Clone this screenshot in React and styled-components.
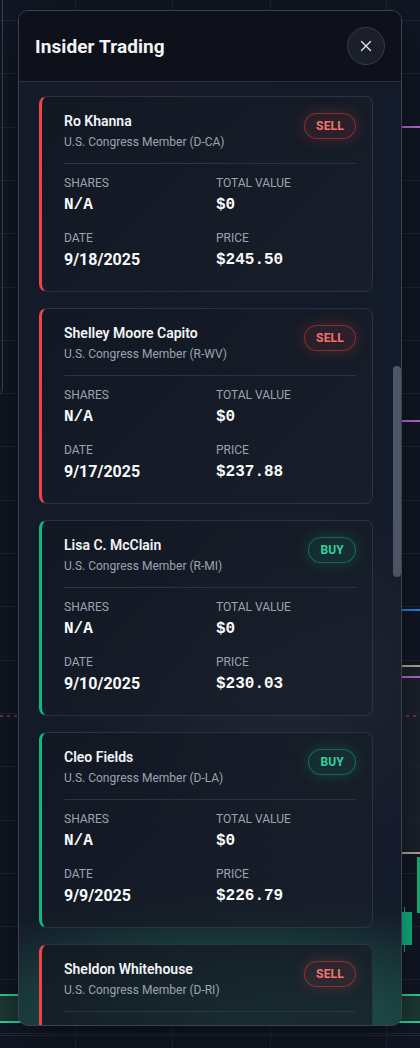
import React from 'react';
import styled, { createGlobalStyle } from 'styled-components';
import { X } from 'lucide-react';

const GlobalStyle = createGlobalStyle`
	* { box-sizing: border-box; }
	body {
		margin: 0;
		background: #111725;
		font-family: Roboto, "Noto Sans", sans-serif;
		color: #f3f4f6;
	}
`;

const StyledPage = styled.div`
	position: relative;
	width: 420px;
	height: 1048px;
	overflow: hidden;
	background: #111725;
`;

const StyledChart = styled.svg`
	position: absolute;
	inset: 0;
	z-index: 0;
`;

const StyledModal = styled.div`
	position: absolute;
	top: 10px;
	left: 18px;
	width: 384px;
	height: 1016px;
	z-index: 1;
	display: flex;
	flex-direction: column;
	border: 1px solid #3a4150;
	border-radius: 10px;
	overflow: hidden;
	background:
		radial-gradient(ellipse 90% 13% at 55% 100%, rgba(45, 160, 115, 0.6), transparent 100%),
		radial-gradient(ellipse 60% 20% at 70% 66%, rgba(60, 55, 70, 0.35), transparent 100%),
		radial-gradient(ellipse 60% 10% at 30% 0%, rgba(60, 30, 45, 0.45), transparent 100%),
		#131a29;
	box-shadow: 0 10px 40px rgba(0, 0, 0, 0.5);
`;

const StyledHeader = styled.div`
	height: 71px;
	flex-shrink: 0;
	display: flex;
	align-items: center;
	justify-content: space-between;
	padding: 0 16px 0 16px;
	background: #0e111a;
	border-bottom: 1px solid #2a3040;
`;

const StyledTitle = styled.h2`
	margin: 0;
	font-size: 19px;
	font-weight: 700;
	color: #f3f4f6;
	letter-spacing: 0.1px;
`;

const StyledClose = styled.button`
	width: 38px;
	height: 38px;
	border-radius: 50%;
	border: 1px solid #343b4a;
	background: #1a1f2b;
	color: #e5e7eb;
	display: flex;
	align-items: center;
	justify-content: center;
	padding: 0;
`;

const StyledBody = styled.div`
	position: relative;
	flex: 1;
	overflow: hidden;
	padding: 14px 28px 14px 20px;
	display: flex;
	flex-direction: column;
	gap: 16px;
`;

// scroll thumb drawn over the list's right edge
const StyledThumb = styled.div`
	position: absolute;
	right: 0;
	width: 8px;
	border-radius: 4px;
	background: #4b5563;
`;

const StyledCard = styled.div`
	flex-shrink: 0;
	border: 1px solid #2b333f;
	border-left: 3px solid ${props => (props.type === 'BUY' ? '#10b981' : '#ef4444')};
	border-radius: 8px;
	background: linear-gradient(135deg, rgba(18, 24, 34, 0.86), rgba(24, 32, 42, 0.74));
	padding: 14px 16px 20px 22px;
`;

const StyledCardTop = styled.div`
	display: flex;
	justify-content: space-between;
	align-items: flex-start;
	padding-bottom: 12px;
	border-bottom: 1px solid #2c3440;
`;

const StyledName = styled.div`
	font-size: 14px;
	line-height: 20px;
	font-weight: 600;
	color: #f3f4f6;
`;

const StyledRole = styled.div`
	margin-top: 2px;
	font-size: 12px;
	line-height: 18px;
	color: #9ca3af;
`;

const StyledBadge = styled.span`
	margin-top: 2px;
	height: 26px;
	padding: 0 11px;
	display: flex;
	align-items: center;
	border-radius: 13px;
	font-size: 12px;
	font-weight: 700;
	letter-spacing: 0.2px;
	color: ${props => (props.type === 'BUY' ? '#34d399' : '#f87171')};
	border: 1px solid ${props => (props.type === 'BUY' ? 'rgba(16, 185, 129, 0.45)' : 'rgba(239, 68, 68, 0.45)')};
	background: ${props => (props.type === 'BUY' ? 'rgba(16, 185, 129, 0.1)' : 'rgba(239, 68, 68, 0.1)')};
	box-shadow: 0 0 14px ${props => (props.type === 'BUY' ? 'rgba(16, 185, 129, 0.25)' : 'rgba(239, 68, 68, 0.25)')};
`;

const StyledGrid = styled.div`
	margin-top: 11px;
	display: grid;
	grid-template-columns: 152px 1fr;
	row-gap: 14px;
`;

const StyledLabel = styled.div`
	font-size: 12px;
	line-height: 16px;
	color: #9ca3af;
	text-transform: uppercase;
`;

const StyledValue = styled.div`
	margin-top: 3px;
	font-size: 16px;
	line-height: 22px;
	font-weight: 700;
	color: #f9fafb;
	font-family: ${props => (props.mono ? '"Liberation Mono", "DejaVu Sans Mono", monospace' : 'Roboto, "Noto Sans", sans-serif')};
`;

const trades = [
	{ name: 'Ro Khanna', role: 'U.S. Congress Member (D-CA)', type: 'SELL', date: '9/18/2025', price: '$245.50' },
	{ name: 'Shelley Moore Capito', role: 'U.S. Congress Member (R-WV)', type: 'SELL', date: '9/17/2025', price: '$237.88' },
	{ name: 'Lisa C. McClain', role: 'U.S. Congress Member (R-MI)', type: 'BUY', date: '9/10/2025', price: '$230.03' },
	{ name: 'Cleo Fields', role: 'U.S. Congress Member (D-LA)', type: 'BUY', date: '9/9/2025', price: '$226.79' },
	{ name: 'Sheldon Whitehouse', role: 'U.S. Congress Member (D-RI)', type: 'SELL', date: '9/5/2025', price: '$239.69' },
];

// grid lines behind the dialog, every ~53px
const gridRows = Array.from({ length: 20 }, (_, i) => Math.round(20 + i * 53.3));

const ChartBackdrop = () => (
	<StyledChart width="420" height="1048" viewBox="0 0 420 1048">
		<rect x="402" y="666" width="18" height="186" fill="#1c212c" />
		<rect x="0" y="995" width="420" height="27" fill="#1d3a33" />
		{gridRows.map(y => (
			<line key={y} x1="0" x2="420" y1={y + 0.5} y2={y + 0.5} stroke="#1f2735" />
		))}
		{[75, 172, 270, 386].map(x => (
			<line key={x} x1={x + 0.5} x2={x + 0.5} y1="0" y2="1048" stroke="#1f2735" />
		))}
		<path d="M2.5 0 V388 Q2.5 394 -4 394" fill="none" stroke="#3a4252" />
		<line x1="402" x2="420" y1="127" y2="127" stroke="#b86ad8" strokeWidth="2" />
		<line x1="402" x2="420" y1="421" y2="421" stroke="#b86ad8" strokeWidth="2" />
		<line x1="402" x2="420" y1="610" y2="610" stroke="#1e88e5" strokeWidth="2" />
		<line x1="402" x2="420" y1="666" y2="666" stroke="#b5ad95" strokeWidth="2" />
		<line x1="402" x2="420" y1="677" y2="677" stroke="#b86ad8" strokeWidth="2" />
		<line x1="0" x2="420" y1="716" y2="716" stroke="#d9475a" strokeDasharray="3 4" />
		<line x1="402" x2="420" y1="853" y2="853" stroke="#b5ad95" strokeWidth="2" />
		<rect x="417" y="857" width="3" height="56" fill="#10b981" />
		<line x1="404.5" x2="404.5" y1="907" y2="952" stroke="#10b981" />
		<rect x="402" y="912" width="10" height="33" fill="#10b981" />
		<line x1="0" x2="420" y1="995" y2="995" stroke="#34d399" strokeWidth="2" />
		<line x1="0" x2="420" y1="1022" y2="1022" stroke="#34d399" strokeWidth="2" />
		<line x1="0" x2="420" y1="1035.5" y2="1035.5" stroke="#252d3b" />
	</StyledChart>
);

const TradeCard = ({ trade }) => (
	<StyledCard type={trade.type}>
		<StyledCardTop>
			<div>
				<StyledName>{trade.name}</StyledName>
				<StyledRole>{trade.role}</StyledRole>
			</div>
			<StyledBadge type={trade.type}>{trade.type}</StyledBadge>
		</StyledCardTop>
		<StyledGrid>
			<div>
				<StyledLabel>Shares</StyledLabel>
				<StyledValue mono>N/A</StyledValue>
			</div>
			<div>
				<StyledLabel>Total Value</StyledLabel>
				<StyledValue mono>$0</StyledValue>
			</div>
			<div>
				<StyledLabel>Date</StyledLabel>
				<StyledValue>{trade.date}</StyledValue>
			</div>
			<div>
				<StyledLabel>Price</StyledLabel>
				<StyledValue mono>{trade.price}</StyledValue>
			</div>
		</StyledGrid>
	</StyledCard>
);

const App = () => {
	// list is shown part way down, thumb matches that offset
	const scroll = { top: 284, size: 211 };

	return (
		<>
			<GlobalStyle />
			<StyledPage>
				<ChartBackdrop />
				<StyledModal>
					<StyledHeader>
						<StyledTitle>Insider Trading</StyledTitle>
						<StyledClose aria-label="Close">
							<X size={18} strokeWidth={1.6} />
						</StyledClose>
					</StyledHeader>
					<StyledBody>
						{trades.map((trade, i) => (
							<TradeCard key={i} trade={trade} />
						))}
						<StyledThumb style={{ top: scroll.top, height: scroll.size }} />
					</StyledBody>
				</StyledModal>
			</StyledPage>
		</>
	);
};

export default App;
